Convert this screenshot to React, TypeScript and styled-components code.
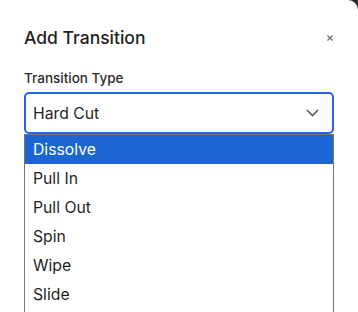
import React, { useState } from "react";
import styled, { createGlobalStyle } from "styled-components";

// global
const GlobalStyle = createGlobalStyle`
  html, body {
    margin: 0;
    padding: 0;
    background: #2a2a2a;
  }
  body {
    font-family: Inter, "Noto Sans", "Liberation Sans", sans-serif;
    color: #1f1f1f;
  }
`;

// style
const Dialog = styled.div`
  box-sizing: border-box;
  width: 358px;
  height: 312px;
  overflow: hidden;
  background: #ffffff;
  border-top-right-radius: 10px;
  padding: 26px 24px 0 24px;
`;

const Header = styled.div`
  display: flex;
  align-items: center;
  justify-content: space-between;
  height: 24px;
`;

const Title = styled.h2`
  margin: 0;
  font-size: 17.5px;
  font-weight: 500;
  line-height: 24px;
  color: #1f1f1f;
`;

const CloseButton = styled.button`
  border: none;
  background: none;
  padding: 0;
  width: 8px;
  height: 8px;
  display: flex;
  align-items: center;
  justify-content: center;
  color: #6b6f76;
  cursor: pointer;
`;

const Label = styled.div`
  margin-top: 19px;
  font-size: 13.5px;
  line-height: 18px;
  font-weight: 500;
  color: #2b2b2b;
`;

const SelectBox = styled.div`
  box-sizing: border-box;
  margin-top: 5px;
  height: 42px;
  border: 2px solid #2563eb;
  border-radius: 5px;
  display: flex;
  align-items: center;
  justify-content: space-between;
  padding: 0 13px 0 7px;
  font-size: 15.75px;
  color: #1f1f1f;
`;

const List = styled.ul`
  list-style: none;
  margin: 0;
  padding: 0;
  border: 1px solid #767676;
  border-bottom: none;
  height: 200px;
`;

const Option = styled.li<{ $active?: boolean }>`
  height: 29px;
  line-height: 29px;
  padding-left: 8px;
  font-size: 15.75px;
  background: ${(p) => (p.$active ? "#1b66d2" : "#ffffff")};
  color: ${(p) => (p.$active ? "#ffffff" : "#1f1f1f")};
`;

const options = ["Dissolve", "Pull In", "Pull Out", "Spin", "Wipe", "Slide"];

const App = () => {
  const [active] = useState("Dissolve");

  return (
    <>
      <GlobalStyle />
      <Dialog>
        <Header>
          <Title>Add Transition</Title>
          <CloseButton aria-label="close">
            <svg width="6" height="6" viewBox="0 0 6 6">
              <path d="M0.5 0.5 L5.5 5.5 M5.5 0.5 L0.5 5.5" stroke="currentColor" strokeWidth="1.3" />
            </svg>
          </CloseButton>
        </Header>
        <Label>Transition Type</Label>
        <SelectBox>
          <span>Hard Cut</span>
          <svg width="13" height="8" viewBox="0 0 13 8">
            <path d="M1 1 L6.5 6.5 L12 1" fill="none" stroke="#555a62" strokeWidth="1.6" />
          </svg>
        </SelectBox>
        <List>
          {options.map((o) => (
            <Option key={o} $active={o === active}>
              {o}
            </Option>
          ))}
        </List>
      </Dialog>
    </>
  );
};

export default App;
